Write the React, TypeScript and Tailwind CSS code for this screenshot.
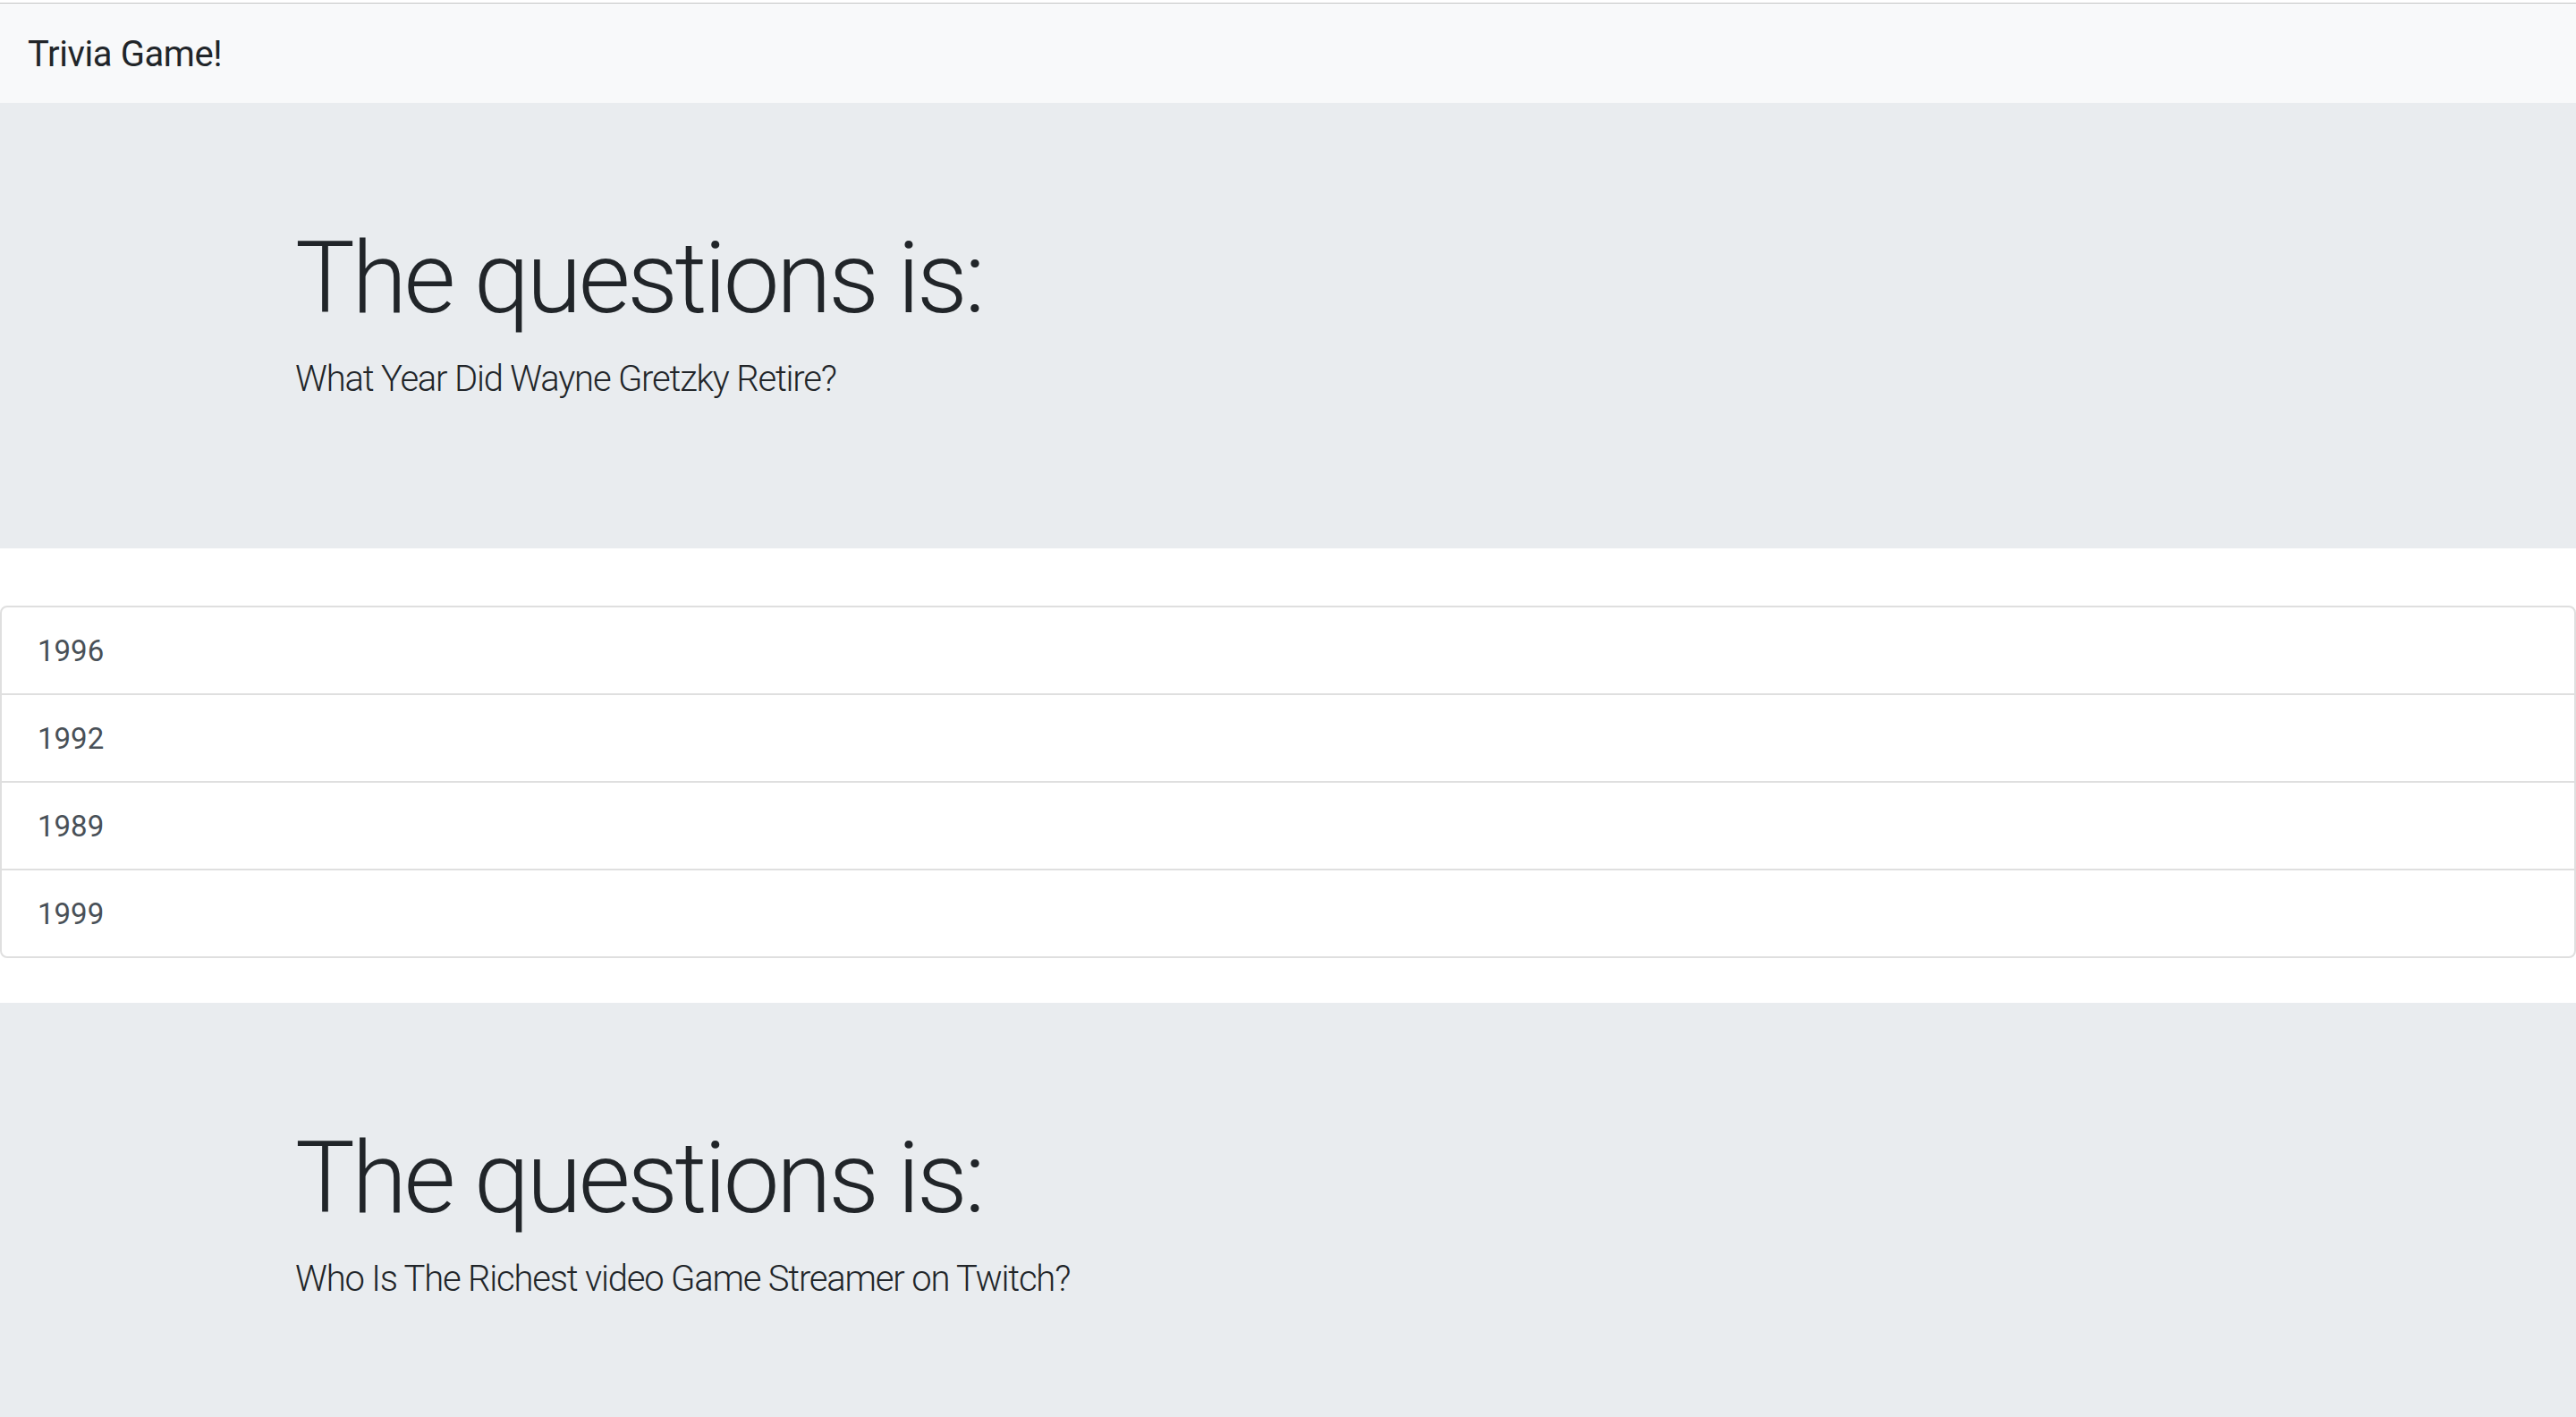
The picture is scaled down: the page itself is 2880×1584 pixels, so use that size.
// trivia page - question blocks with answer lists
const questions = [
  {
    question: "What Year Did Wayne Gretzky Retire?",
    answers: ["1996", "1992", "1989", "1999"],
  },
  {
    question: "Who Is The Richest video Game Streamer on Twitch?",
    answers: [] as string[],
  },
];

const Navbar = () => {
  return (
    <div className="bg-white pt-[3px]">
      <div className="h-px bg-[#c4c4c4]" />
      <nav className="flex h-[111px] items-center bg-[#f8f9fa] pt-[3px] pl-[31px]">
        <span className="text-[40px] leading-[60px] tracking-[-0.01em] text-[#212529]">
          Trivia Game!
        </span>
      </nav>
    </div>
  );
};

interface questionProps {
  question: string;
  answers: string[];
}

const Question = ({ question, answers }: questionProps) => {
  return (
    <div className="mb-[50px]">
      <div className="mb-[64px] bg-[#e9ecef] px-[64px] pt-[129px] pb-[127px]">
        <div className="mx-auto w-[2280px] px-[30px] text-[#212529]">
          <h1 className="mb-[16px] text-[112px] leading-[134px] font-light tracking-[-0.031em]">
            The questions is:
          </h1>
          <p className="mb-[32px] text-[40px] leading-[60px] font-light tracking-[-0.03em]">
            {question}
          </p>
        </div>
      </div>

      {answers.length > 0 && (
        <ul className="overflow-hidden rounded-[8px] border-2 border-[#dfdfdf]">
          {answers.map((answer, i) => (
            <li
              key={i}
              className={
                i === 0
                  ? "px-[40px] pt-[25px] pb-[23px] text-[33px] leading-[48px] text-[#495057]"
                  : "border-t-2 border-[#dfdfdf] px-[40px] pt-[25px] pb-[23px] text-[33px] leading-[48px] text-[#495057]"
              }
            >
              {answer}
            </li>
          ))}
        </ul>
      )}
    </div>
  );
};

export default function App() {
  return (
    <div
      className="min-h-screen bg-white"
      style={{ fontFamily: "Roboto, 'Liberation Sans', sans-serif" }}
    >
      <Navbar />
      {questions.map((q, i) => (
        <Question key={i} question={q.question} answers={q.answers} />
      ))}
    </div>
  );
}
